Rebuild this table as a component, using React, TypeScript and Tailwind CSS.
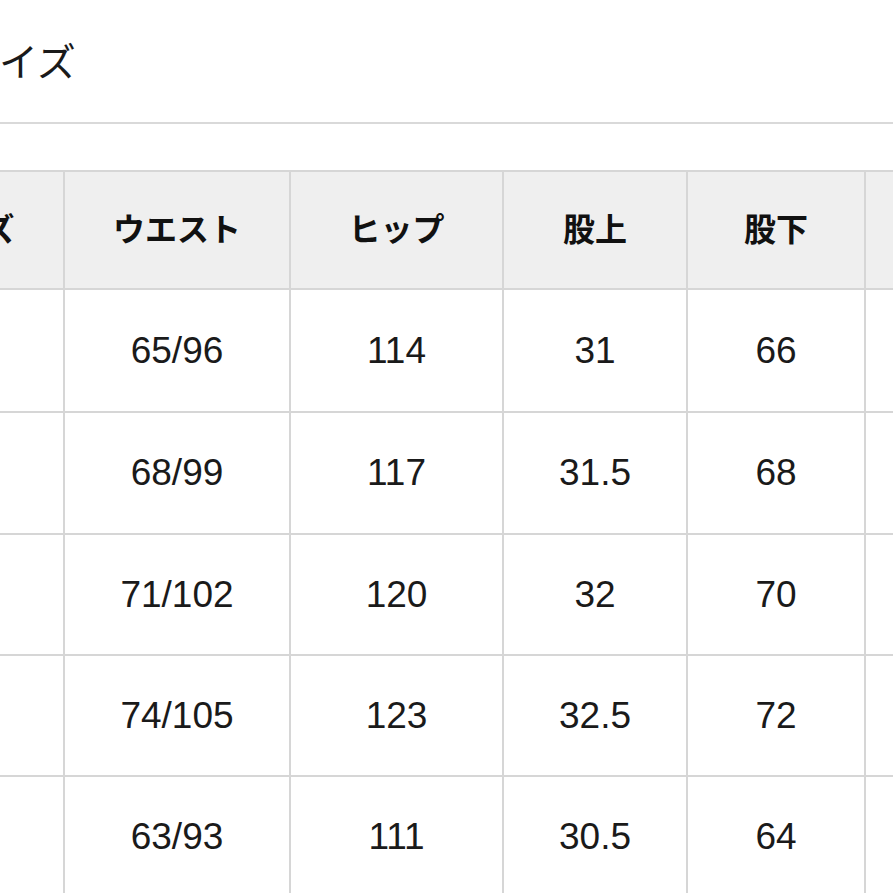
const JP = "font-['Liberation_Sans','Noto_Sans_CJK_JP',sans-serif]";

const HEADERS = ["サイズ", "ウエスト", "ヒップ", "股上", "股下", "ワタリ"];

const ROWS = [
  ["S", "65/96", "114", "31", "66", "34"],
  ["M", "68/99", "117", "31.5", "68", "35"],
  ["L", "71/102", "120", "32", "70", "36"],
  ["XL", "74/105", "123", "32.5", "72", "37"],
  ["XS", "63/93", "111", "30.5", "64", "33"],
];

export default function App() {
  return (
    <div className={`w-[893px] h-[893px] overflow-hidden bg-white text-[#1a1a1a] ${JP}`}>
      <div className="h-[122px] flex items-center">
        <h2 className="ml-[-40px] mt-[2px] text-[39px] font-normal leading-none whitespace-nowrap">サイズ</h2>
      </div>
      <div className="h-[2px] bg-[#d9d9d9]" />
      <div className="h-[46px]" />
      <div className="ml-[-131px] grid grid-cols-[194px_226px_213px_184px_178px_200px] grid-rows-[118px_123px_122px_121px_121px_121px] w-max border-t-2 border-l-2 border-[#d6d6d6]">
        {HEADERS.map((h) => (
          <div
            key={h}
            className="flex items-center justify-center bg-[#efefef] border-r-2 border-b-2 border-[#d6d6d6] text-[32px] font-bold text-[#111] whitespace-nowrap"
          >
            {h}
          </div>
        ))}
        {ROWS.map((row, i) =>
          row.map((v, j) => (
            <div
              key={`${i}-${j}`}
              className="flex items-center justify-center bg-white border-r-2 border-b-2 border-[#d6d6d6] text-[37px] text-[#1a1a1a]"
            >
              {v}
            </div>
          ))
        )}
      </div>
    </div>
  );
}
